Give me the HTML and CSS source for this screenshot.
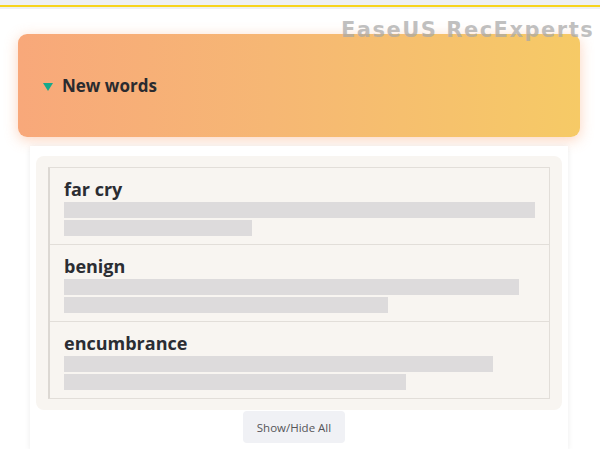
FILE: index.html
```html
<!DOCTYPE html>
<html>
<head>
<meta charset="utf-8">
<link rel="stylesheet" href="styles.css">
</head>
<body>
<div class="topbar"><div class="topline"></div></div>
<div class="watermark">EaseUS RecExperts</div>
<div class="card">
  <span class="tri"></span>
  <span class="card-title">New words</span>
</div>
<div class="panel">
  <div class="inner">
    <ul class="list">
      <li class="item">
        <div class="word">far cry</div>
        <div class="bar" style="width:471px"></div>
        <div class="bar" style="width:188px"></div>
      </li>
      <li class="item">
        <div class="word">benign</div>
        <div class="bar" style="width:455px"></div>
        <div class="bar" style="width:324px"></div>
      </li>
      <li class="item">
        <div class="word">encumbrance</div>
        <div class="bar" style="width:429px"></div>
        <div class="bar" style="width:342px"></div>
      </li>
    </ul>
  </div>
  <div class="actions">
    <button class="btn">Show/Hide All</button>
  </div>
</div>
</body>
</html>
```
FILE: styles.css
```css
html, body {
  margin: 0;
  padding: 0;
  background: #ffffff;
  font-family: "Open Sans", "Noto Sans", sans-serif;
}
.topbar {
  height: 9px;
  background: #eef0f4;
  padding-top: 5px;
  box-sizing: border-box;
}
.topline {
  height: 2px;
  background: #f7d41e;
}
.watermark {
  position: absolute;
  top: 18px;
  left: 341px;
  font-family: "DejaVu Sans", "Liberation Sans", sans-serif;
  font-weight: bold;
  font-size: 21px;
  letter-spacing: 1.5px;
  color: rgba(168, 168, 168, 0.72);
  z-index: 5;
  white-space: nowrap;
}
.card {
  margin: 25px 20px 0 18px;
  height: 103px;
  border-radius: 9px;
  background: linear-gradient(90deg, #f8a87a 0%, #f6b774 45%, #f6ca66 100%);
  box-shadow: 0 3px 14px rgba(248, 160, 110, 0.45);
  display: flex;
  align-items: center;
  padding-left: 25px;
  box-sizing: border-box;
}
.tri {
  width: 0;
  height: 0;
  border-left: 5px solid transparent;
  border-right: 5px solid transparent;
  border-top: 8px solid #17a98b;
  margin-right: 9px;
  margin-top: 3px;
}
.card-title {
  font-weight: 700;
  font-size: 17px;
  color: #2a2b2f;
}
.panel {
  margin: 9px 32px 0 30px;
  background: #ffffff;
  padding: 10px 6px 6px 6px;
  box-shadow: 0 1px 6px rgba(0, 0, 0, 0.08);
}
.inner {
  background: #f8f5f1;
  border-radius: 8px;
  padding: 11px 12px;
}
.list {
  list-style: none;
  margin: 0;
  padding: 0;
  border: 1px solid #e2ded9;
  border-left: 2px solid #dcd8d3;
}
.item {
  padding: 9px 14px 8px 14px;
  border-top: 1px solid #e2ded9;
}
.item:first-child {
  border-top: none;
}
.word {
  font-weight: 700;
  font-size: 18px;
  line-height: 24px;
  color: #2b2d33;
}
.bar {
  height: 16px;
  background: #dddbdc;
  margin-top: 2px;
}
.word + .bar {
  margin-top: 1px;
}
.actions {
  display: flex;
  justify-content: center;
  padding-top: 1px;
  padding-right: 10px;
}
.btn {
  font-family: "Open Sans", "Noto Sans", sans-serif;
  font-size: 11.5px;
  color: #555559;
  background: #f0f1f5;
  border: none;
  border-radius: 4px;
  width: 102px;
  height: 32px;
  padding: 0;
}
```
